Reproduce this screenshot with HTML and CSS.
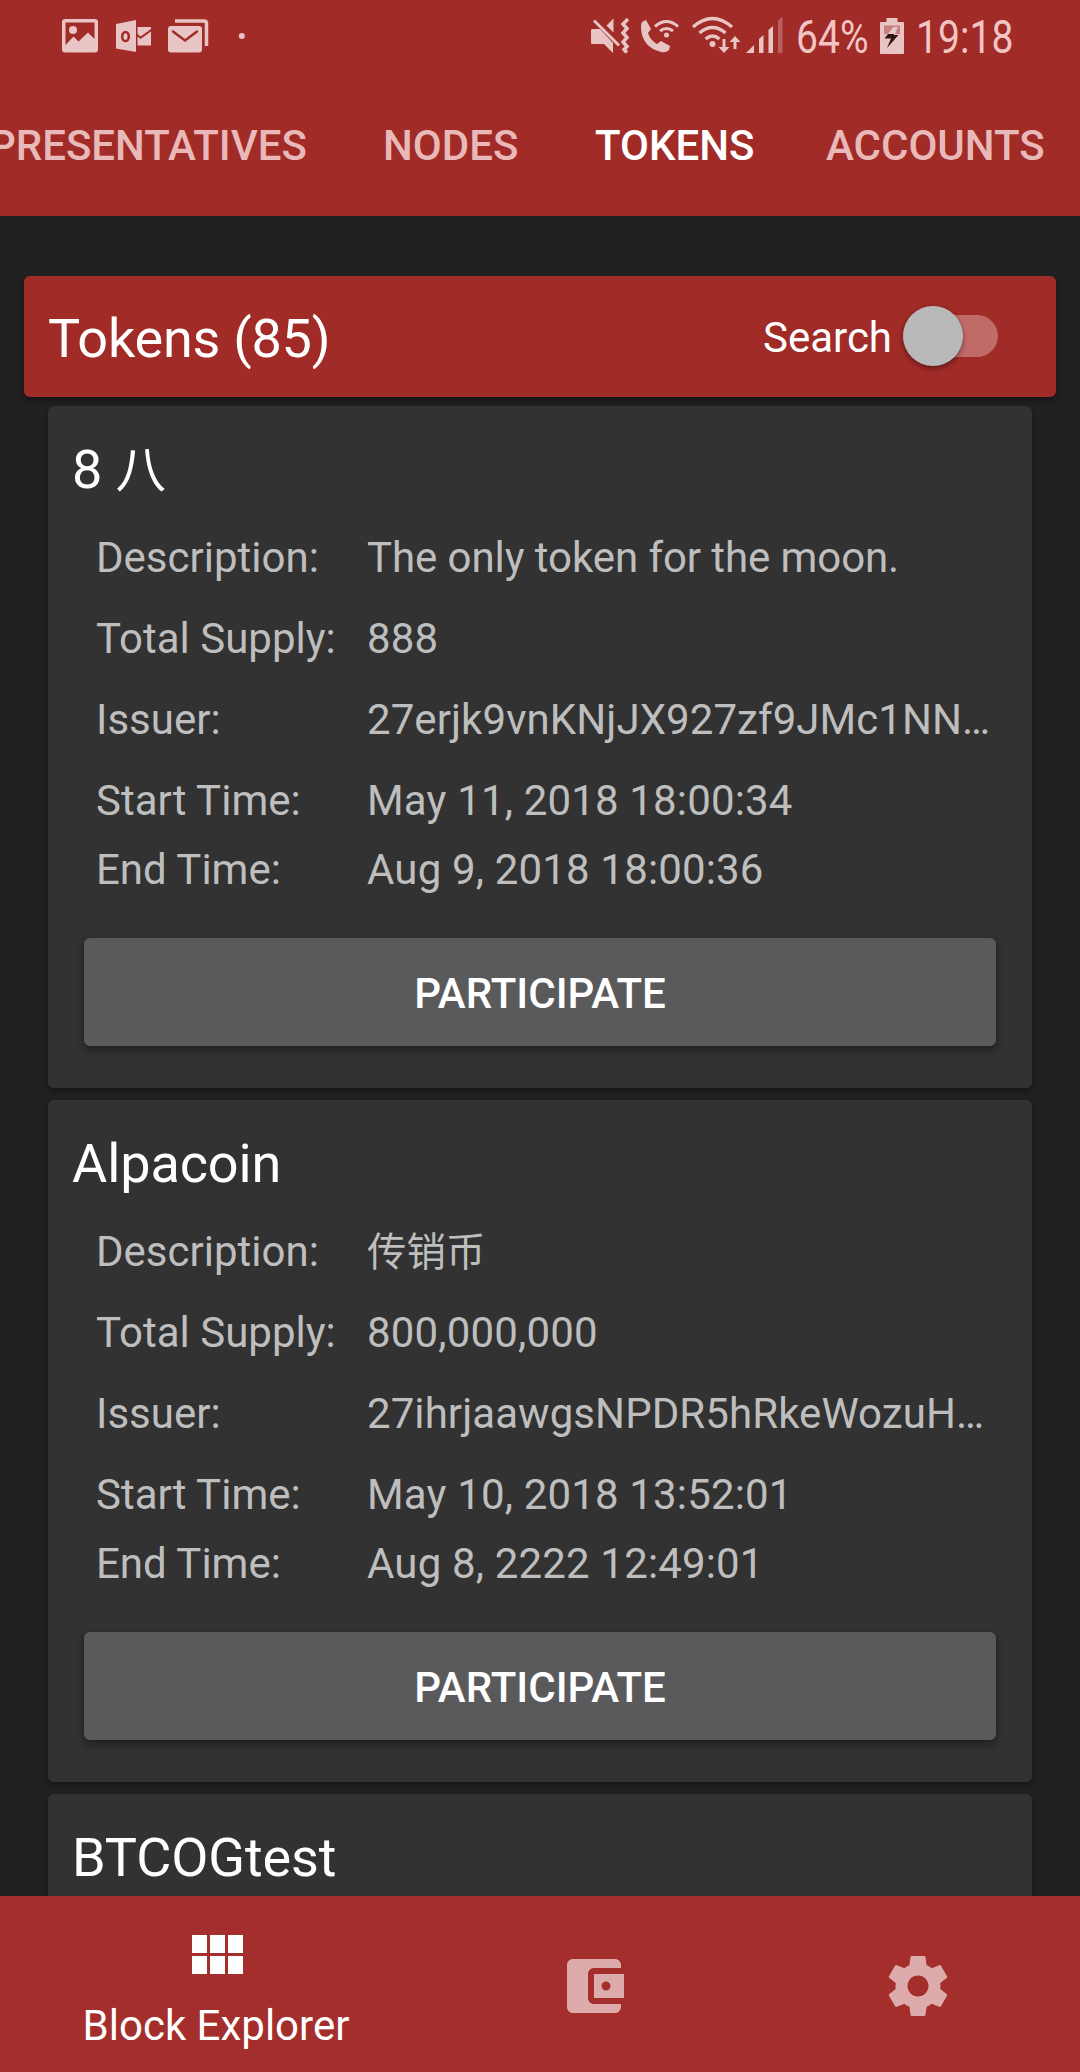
FILE: index.html
```html
<!DOCTYPE html>
<html lang="en">
<head>
<meta charset="utf-8">
<title>Block Explorer</title>
<link rel="stylesheet" href="styles.css">
</head>
<body>
<div class="screen">
  <header class="header">
    <div class="status">
      <svg class="status-left" width="190" height="72" viewBox="60 0 190 72">
        <path fill-rule="evenodd" d="M65 19h30q3 0 3 3v27.500q0 3-3 3H65q-3 0-3-3V22q0-3 3-3zM65.500 22.500V45l8-8.500 5 5 9.500-9 6.500 6.500V22.500z"/>
        <circle cx="73" cy="30" r="4"/>
        <path d="M116 24l20-4v32l-20-3.500z"/>
        <ellipse class="cut-line" cx="125.500" cy="36.500" rx="3.300" ry="4.600"/>
        <path d="M137.500 27H151v2l-10.500 7.500-3-2.500zM137.500 36.500l3 2.500L151 31.500V45.500h-13.500z"/>
        <path d="M171 26h28q3 0 3 3v20.500q0 3-3 3h-28q-3 0-3-3V29q0-3 3-3z"/>
        <path class="cut-line" stroke-linecap="round" d="M173 31.500l12 9 12-9"/>
        <path class="stroke" stroke-width="3.500" d="M175 21h29q2.500 0 2.500 2.500V46"/>
        <circle cx="241.800" cy="36" r="3"/>
      </svg>
      <svg class="status-right" width="200" height="72" viewBox="588 0 200 72">
        <path d="M592 29h8l13 14v10l-9-9h-12q-1 0-1-1V30zM613.500 18.500v14l-7-7z"/>
        <path class="stroke" stroke-width="3" d="M594 20.500l25 25"/>
        <path class="stroke" stroke-width="3.500" d="M628 19l-5 5 4 4.500-4 4.500 4 4.500-4 4.500 4 4.500-3 3 3 3"/>
        <path d="M642 22l4-2 5 9-3 4q2 7 9 11l4-3 9 5-1 4q-3 3-8 2-19-5-20-24 0-4 1-6z"/>
        <g class="stroke" stroke-width="3"><path d="M655 26.500q11.500-10 23 0M660 31q6.500-5 13 0"/></g>
        <circle cx="666.500" cy="35" r="2.500"/>
        <g class="stroke" stroke-width="3.300"><path d="M693 27q19.500-17 39 0M699.500 33q13-11 26 0M705.500 39q7-6 14 0"/></g>
        <circle cx="712.500" cy="44" r="3"/>
        <path d="M722.500 39h3v8h4l-5.500 6-5.500-6h4zM733.500 49h3v-7h4l-5.500-6-5.500 6h4z"/>
        <path d="M746 53h8v-8zM759 53h4.500V35l-4.500 4zM768.500 53h4.500V26l-4.500 4z"/>
        <path opacity=".35" d="M778 53h4.500V16.500l-4.500 4z"/>
      </svg>
      <span class="status-text percent">64%</span>
      <svg class="battery" width="24" height="72" viewBox="880 0 24 72">
        <path d="M881 22h5.500v-4h11v4h5.500q1 0 1 1v30q0 1-1 1h-22q-1 0-1-1V23q0-1 1-1z"/>
        <path class="battery-gap" d="M884 25.500h16V34h-16z"/>
        <path d="M893 27h5l-3 7h-7z"/>
        <path class="bolt" d="M888 34h6v1h4.500L887 48l4-9.500h-6.500z"/>
      </svg>
      <span class="status-text clock">19:18</span>
    </div>
    <nav class="tabs">
      <span class="tab tab-reps">REPRESENTATIVES</span>
      <span class="tab tab-nodes">NODES</span>
      <span class="tab tab-tokens active">TOKENS</span>
      <span class="tab">ACCOUNTS</span>
    </nav>
  </header>

  <main class="content">
    <section class="summary">
      <h1 class="summary-title">Tokens (85)</h1>
      <label class="search"><span class="search-label">Search</span><span class="switch"><span class="thumb"></span></span></label>
    </section>

    <article class="card">
      <h2 class="title">8 <span class="han">八</span></h2>
      <dl class="details">
        <dt>Description:</dt><dd class="sentence">The only token for the moon.</dd>
        <dt>Total Supply:</dt><dd>888</dd>
        <dt>Issuer:</dt><dd class="hash">27erjk9vnKNjJX927zf9JMc1NN…</dd>
        <dt>Start Time:</dt><dd>May 11, 2018 18:00:34</dd>
        <dt class="end">End Time:</dt><dd class="end">Aug 9, 2018 18:00:36</dd>
      </dl>
      <button class="participate">PARTICIPATE</button>
    </article>

    <article class="card">
      <h2 class="title">Alpacoin</h2>
      <dl class="details">
        <dt>Description:</dt><dd><span class="han">传销币</span></dd>
        <dt>Total Supply:</dt><dd>800,000,000</dd>
        <dt>Issuer:</dt><dd class="hash">27ihrjaawgsNPDR5hRkeWozuH…</dd>
        <dt>Start Time:</dt><dd>May 10, 2018 13:52:01</dd>
        <dt class="end">End Time:</dt><dd class="end">Aug 8, 2222 12:49:01</dd>
      </dl>
      <button class="participate">PARTICIPATE</button>
    </article>

    <article class="card">
      <h2 class="title">BTCOGtest</h2>
    </article>
  </main>

  <nav class="bottom">
    <a class="item item-explorer">
      <svg width="72" height="72" viewBox="0 0 24 24"><path d="M4 11h5V5H4v6zm0 7h5v-6H4v6zm6 0h5v-6h-5v6zm6 0h5v-6h-5v6zm-6-7h5V5h-5v6zm6-6v6h5V5h-5z"/></svg>
      <span class="item-label">Block Explorer</span>
    </a>
    <a class="item item-wallet">
      <svg width="72" height="72" viewBox="0 0 24 24"><path d="M21 18v1c0 1.100-.9 2-2 2H5c-1.110 0-2-.9-2-2V5c0-1.100.89-2 2-2h14c1.100 0 2 .9 2 2v1h-9c-1.110 0-2 .9-2 2v8c0 1.100.89 2 2 2h9zm-9-2h10V8H12v8zm4-2.500c-.83 0-1.500-.67-1.500-1.500s.67-1.500 1.500-1.500 1.500.67 1.500 1.500-.67 1.500-1.500 1.500z"/></svg>
    </a>
    <a class="item item-settings">
      <svg width="72" height="72" viewBox="0 0 24 24"><path d="M19.430 12.980c.04-.32.07-.64.07-.98s-.03-.66-.07-.98l2.110-1.650c.19-.15.24-.42.12-.64l-2-3.460c-.12-.22-.39-.3-.61-.22l-2.490 1c-.52-.4-1.080-.73-1.690-.98l-.38-2.650C14.460 2.180 14.250 2 14 2h-4c-.25 0-.46.18-.49.42l-.38 2.650c-.61.25-1.170.59-1.690.98l-2.490-1c-.23-.09-.49 0-.61.22l-2 3.460c-.13.22-.07.49.12.64l2.110 1.650c-.04.32-.07.65-.07.98s.03.66.07.98l-2.110 1.650c-.19.15-.24.42-.12.64l2 3.460c.12.22.39.3.61.22l2.490-1c.52.4 1.080.73 1.690.98l.38 2.650c.03.24.24.42.49.42h4c.25 0 .46-.18.49-.42l.38-2.650c.61-.25 1.170-.59 1.690-.98l2.490 1c.23.09.49 0 .61-.22l2-3.460c.12-.22.07-.49-.12-.64l-2.110-1.650zM12 15.500c-1.930 0-3.500-1.570-3.500-3.500s1.570-3.500 3.500-3.500 3.500 1.570 3.500 3.500-1.570 3.500-3.500 3.500z"/></svg>
    </a>
  </nav>
</div>
</body>
</html>
```

FILE: styles.css
```css
* {
  box-sizing: border-box;
}

body {
  margin: 0;
  background: #212121;
  color: #fff;
  font-family: Roboto, "Noto Sans CJK SC", sans-serif;
}

h1, h2, dl, dd {
  margin: 0;
  font-weight: 400;
}

svg {
  display: block;
  flex: none;
}

.screen {
  display: flex;
  flex-direction: column;
  width: 1080px;
  height: 2072px;
  overflow: hidden;
}

.header {
  flex: none;
  height: 216px;
  background: #a02b27;
}

.status {
  display: flex;
  align-items: center;
  height: 72px;
  padding-left: 60px;
  fill: #e8c4c5;
  color: #f2c4c3;
}

.stroke {
  fill: none;
  stroke: #e8c4c5;
}

.cut-line {
  fill: none;
  stroke: #a02b27;
  stroke-width: 2.5;
}

.status-right {
  margin-left: 338px;
}

.battery {
  margin-left: 12px;
}

.battery-gap {
  fill: #c47f7e;
}

.bolt {
  fill: #2e1414;
}

.status-text {
  font-family: Roboto, sans-serif;
  font-size: 46px;
  line-height: 72px;
  white-space: nowrap;
  transform-origin: left center;
  transform: translateY(1px) scaleX(0.85);
}

.percent {
  width: 72px;
  margin-left: 8px;
}

.clock {
  width: 100px;
  margin-left: 12px;
}

.tabs {
  display: flex;
  align-items: center;
  height: 144px;
  padding-top: 3px;
  font-size: 42px;
  font-weight: 500;
  line-height: 56px;
  white-space: nowrap;
  color: #e9b9b9;
}

.tab-reps {
  display: flex;
  justify-content: flex-end;
  width: 307px;
  margin-right: 76px;
}

.tab-nodes {
  width: 212px;
}

.tab-tokens {
  width: 231px;
}

.active {
  color: #fff;
}

.content {
  display: flex;
  flex: 1;
  flex-direction: column;
  min-height: 0;
  padding: 60px 24px 0;
  overflow: hidden;
}

.summary {
  display: flex;
  flex: none;
  align-items: center;
  justify-content: space-between;
  height: 121px;
  margin-bottom: 9px;
  padding: 0 58px 1px 24px;
  border-radius: 6px;
  background: #a02b27;
  box-shadow: 0 3px 6px rgba(0, 0, 0, 0.4);
}

.summary-title {
  padding-top: 6px;
  font-size: 54px;
  line-height: 72px;
  letter-spacing: -0.25px;
}

.search {
  display: flex;
  align-items: center;
  gap: 11px;
  font-size: 42px;
  line-height: 56px;
}

.search-label {
  padding-top: 4px;
}

.switch {
  display: flex;
  align-items: center;
  width: 95px;
  height: 42px;
  border-radius: 21px;
  background: #c16b69;
}

.thumb {
  flex: none;
  width: 60px;
  height: 60px;
  border-radius: 50%;
  background: #b9b9b9;
  box-shadow: 0 2px 5px rgba(0, 0, 0, 0.45);
}

.card {
  flex: none;
  height: 682px;
  margin: 0 24px 12px;
  padding: 24px;
  border-radius: 6px;
  background: #323232;
  box-shadow: 0 3px 6px rgba(0, 0, 0, 0.4);
}

.title {
  height: 76px;
  font-size: 54px;
  line-height: 80px;
  letter-spacing: -0.1px;
}

.han {
  font-size: 0.938em;
  line-height: 1;
}

.details {
  display: grid;
  grid-template-columns: 271px 1fr;
  grid-auto-rows: 57px;
  row-gap: 24px;
  height: 408px;
  padding: 23px 0 0 24px;
  font-size: 42px;
  line-height: 57px;
  white-space: nowrap;
  color: #bebebe;
}

.details dd {
  letter-spacing: 0.16px;
}

.details .hash {
  letter-spacing: 0.07px;
}

.details .sentence {
  letter-spacing: -0.08px;
}

.end {
  margin-top: -12px;
}

.participate {
  display: block;
  width: 912px;
  height: 108px;
  margin: 24px 0 0 12px;
  padding: 3px 0 0;
  border: 0;
  border-radius: 6px;
  background: #5a5a5c;
  box-shadow: 0 4px 8px rgba(0, 0, 0, 0.4);
  color: #fff;
  font: 500 42px/105px Roboto, sans-serif;
}

.bottom {
  display: flex;
  flex: none;
  height: 176px;
  background: #a42e2b;
  fill: #ddabab;
}

.item {
  display: flex;
  flex-direction: column;
  align-items: center;
}

.item-explorer {
  width: 432px;
  padding-top: 24px;
  fill: #fff;
}

.item-label {
  font-size: 42px;
  line-height: 67px;
}

.item-wallet {
  width: 324px;
  padding-top: 54px;
}

.item-settings {
  width: 324px;
  padding-top: 54px;
}
```
